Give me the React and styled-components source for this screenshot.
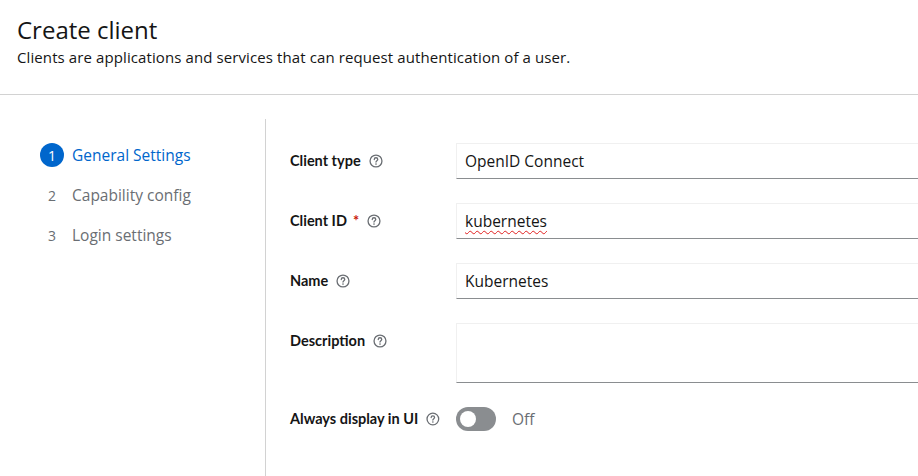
import React from 'react';
import styled, { createGlobalStyle } from 'styled-components';

const GlobalStyle = createGlobalStyle`
  html, body {
    margin: 0;
    padding: 0;
    overflow: hidden;
    background: #fff;
    font-family: "Open Sans", "Noto Sans", sans-serif;
    color: #151515;
  }
`;

const Page = styled.div`
  width: 918px;
  height: 476px;
  overflow: hidden;
`;

const Header = styled.header`
  padding: 15px 17px 26px;
  border-bottom: 1px solid #d2d2d2;
`;

const Title = styled.h1`
  margin: 0;
  font-size: 24px;
  font-weight: 400;
  line-height: 30px;
`;

const Subtitle = styled.p`
  margin: 2px 0 0;
  font-size: 15px;
  letter-spacing: 0.1px;
  line-height: 21px;
`;

const Wizard = styled.div`
  display: flex;
  align-items: flex-start;
  padding: 24px 0 0 24px;
`;

const Nav = styled.nav`
  width: 242px;
  flex-shrink: 0;
  border-right: 1px solid #d2d2d2;
  padding: 24px 16px 0;
  box-sizing: border-box;
  height: 360px;
`;

const Steps = styled.ol`
  list-style: none;
  margin: 0;
  padding: 0;
  display: flex;
  flex-direction: column;
  gap: 16px;
`;

const Step = styled.li`
  display: flex;
  align-items: center;
  gap: 8px;
  height: 24px;
  font-size: 15.5px;
  color: ${p => (p.$active ? '#0066cc' : '#6a6e73')};
`;

const StepNumber = styled.span`
  width: 24px;
  height: 24px;
  border-radius: 50%;
  display: flex;
  align-items: center;
  justify-content: center;
  font-size: 14px;
  background: ${p => (p.$active ? '#0066cc' : 'transparent')};
  color: ${p => (p.$active ? '#fff' : '#6a6e73')};
`;

const Form = styled.form`
  display: grid;
  grid-template-columns: 150px 600px;
  align-content: start;
  align-items: start;
  column-gap: 16px;
  row-gap: 24px;
  padding: 24px 0 0 24px;
`;

const Label = styled.label`
  display: flex;
  align-items: center;
  gap: 8px;
  padding-top: ${p => (p.$toggle ? '2px' : '8px')};
  font-family: "Lato", "Open Sans", sans-serif;
  font-size: 14.5px;
  font-weight: 700;
  line-height: 20px;
  white-space: nowrap;
`;

const Required = styled.span`
  color: #c9190b;
  margin-left: -2px;
`;

const FieldBox = styled.div`
  box-sizing: border-box;
  width: 100%;
  height: ${p => (p.$multiline ? '60px' : '36px')};
  padding: 6px 8px;
  border: 1px solid #f0f0f0;
  border-bottom-color: #8a8d90;
  font-size: 15.5px;
  line-height: 22px;
  color: #151515;
  background: #fff;
`;

const Value = styled.span`
  text-decoration: ${p => (p.$misspelled ? 'underline wavy #e02020' : 'none')};
  text-decoration-thickness: 1px;
  text-underline-offset: 3px;
`;

const SwitchRow = styled.div`
  display: flex;
  align-items: center;
  gap: 16px;
  height: 24px;
`;

const SwitchTrack = styled.span`
  position: relative;
  width: 40px;
  height: 24px;
  border-radius: 12px;
  background: #8a8d90;
  &::after {
    content: '';
    position: absolute;
    top: 4px;
    left: 4px;
    width: 16px;
    height: 16px;
    border-radius: 50%;
    background: #fff;
  }
`;

const SwitchText = styled.span`
  font-size: 15.5px;
  color: #6a6e73;
`;

function HelpIcon() {
  return (
    <svg width="14" height="14" viewBox="0 0 16 16" aria-hidden="true">
      <circle cx="8" cy="8" r="6.8" fill="none" stroke="#6a6e73" strokeWidth="1.5" />
      <path
        d="M6 6.3a2 2 0 0 1 4 0c0 1.3-2 1.5-2 2.9"
        fill="none"
        stroke="#6a6e73"
        strokeWidth="1.5"
        strokeLinecap="round"
      />
      <circle cx="8" cy="11.5" r="0.95" fill="#6a6e73" />
    </svg>
  );
}

const steps = ['General Settings', 'Capability config', 'Login settings'];

export default function App() {
  return (
    <Page>
      <GlobalStyle />
      <Header>
        <Title>Create client</Title>
        <Subtitle>Clients are applications and services that can request authentication of a user.</Subtitle>
      </Header>
      <Wizard>
        <Nav>
          <Steps>
            {steps.map((s, i) => (
              <Step key={s} $active={i === 0}>
                <StepNumber $active={i === 0}>{i + 1}</StepNumber>
                {s}
              </Step>
            ))}
          </Steps>
        </Nav>
        <Form onSubmit={e => e.preventDefault()}>
          <Label>Client type <HelpIcon /></Label>
          <FieldBox role="textbox"><Value>OpenID Connect</Value></FieldBox>

          <Label>Client ID <Required>*</Required> <HelpIcon /></Label>
          <FieldBox role="textbox"><Value $misspelled>kubernetes</Value></FieldBox>

          <Label>Name <HelpIcon /></Label>
          <FieldBox role="textbox"><Value>Kubernetes</Value></FieldBox>

          <Label>Description <HelpIcon /></Label>
          <FieldBox role="textbox" $multiline />

          <Label $toggle>Always display in UI <HelpIcon /></Label>
          <SwitchRow>
            <SwitchTrack />
            <SwitchText>Off</SwitchText>
          </SwitchRow>
        </Form>
      </Wizard>
    </Page>
  );
}
